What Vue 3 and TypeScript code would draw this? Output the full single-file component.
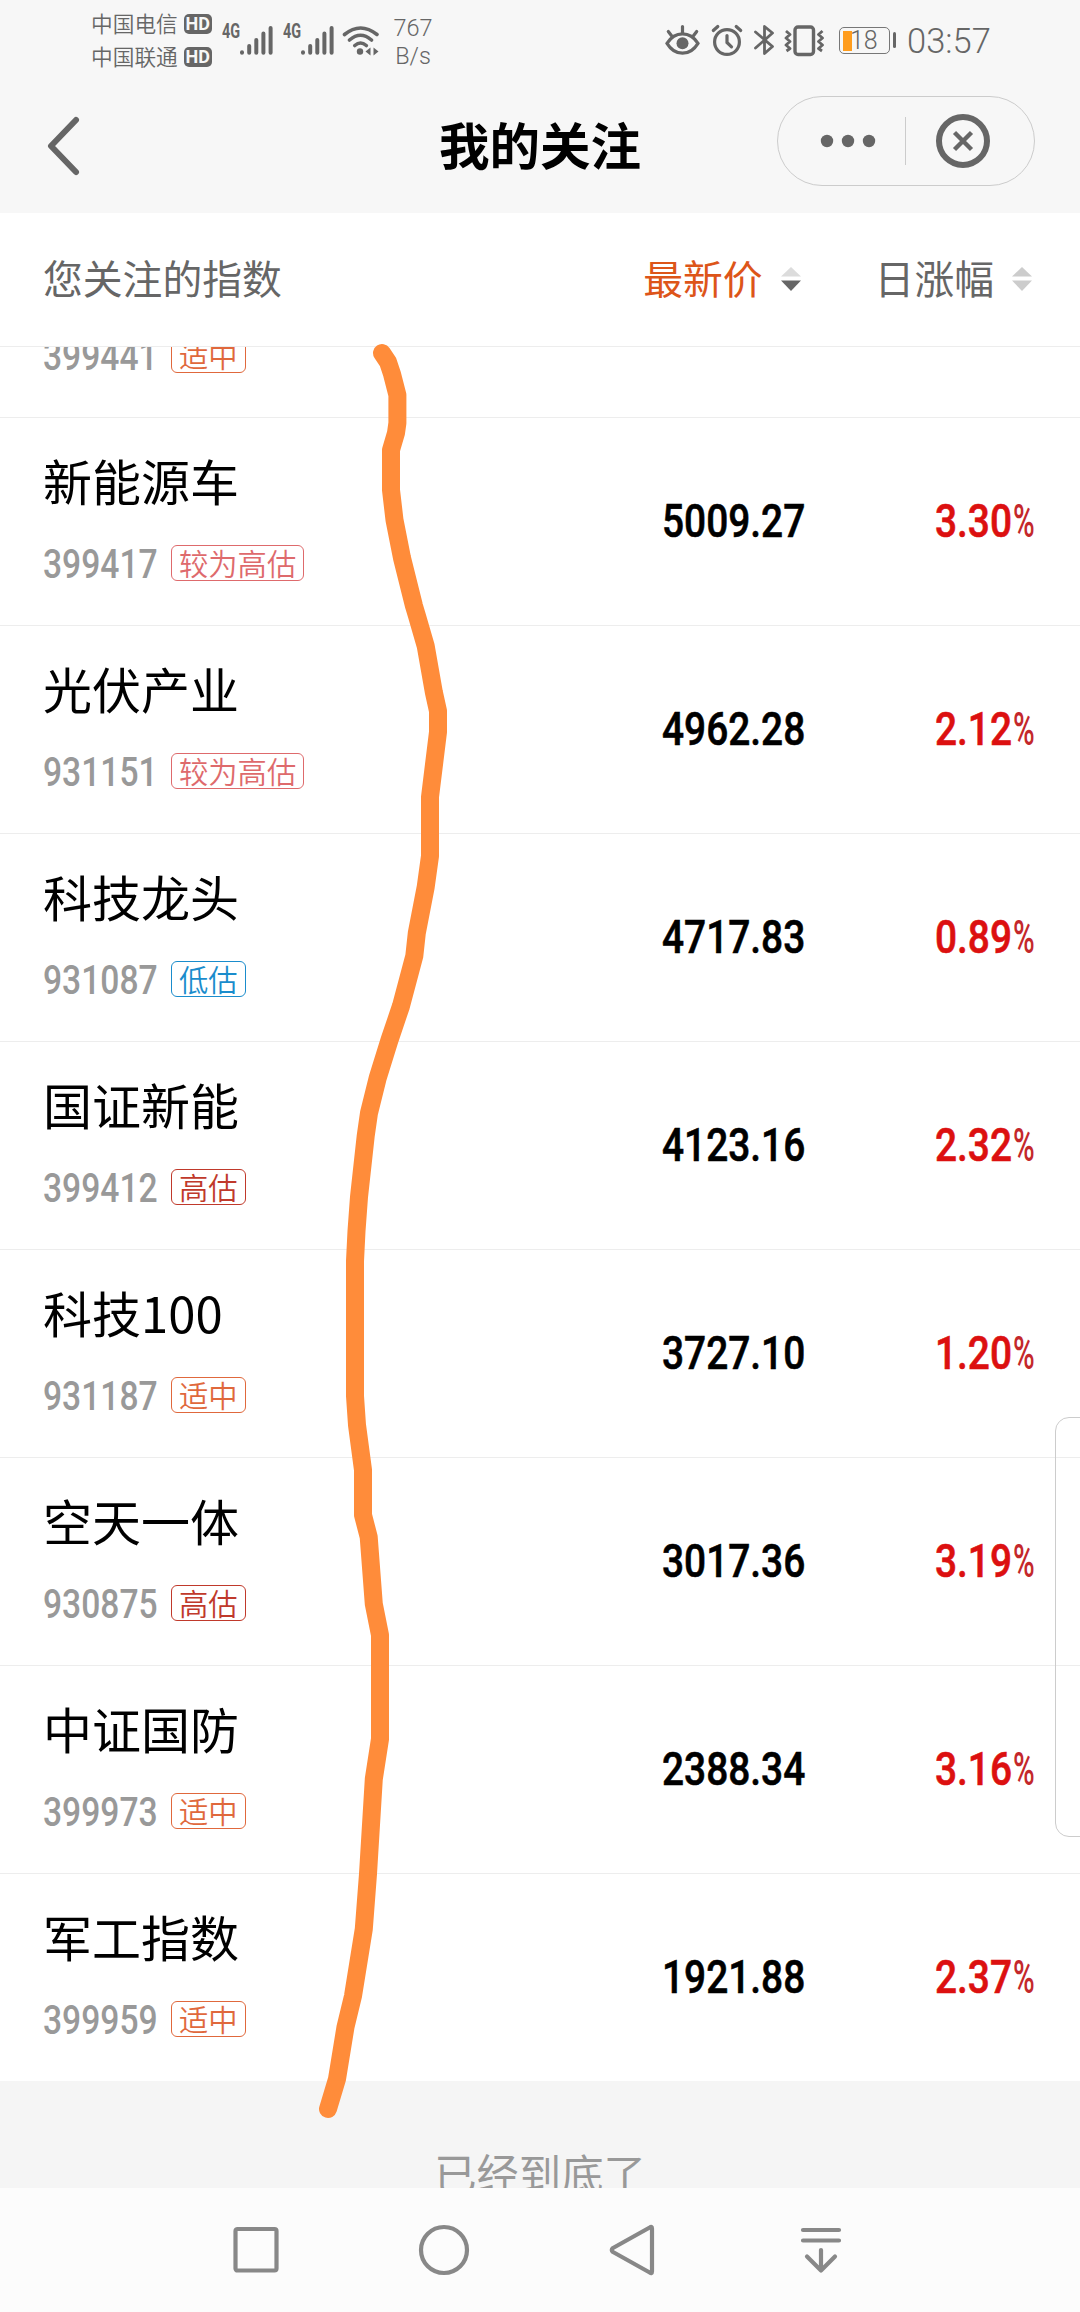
<script setup lang="ts">
type Level = 'fair' | 'rather' | 'high' | 'low'

interface IndexRow {
  name: string
  code: string
  level: Level
  price: string
  change: string
}

const levelText: Record<Level, string> = {
  fair: '适中',
  rather: '较为高估',
  high: '高估',
  low: '低估',
}

const rows: IndexRow[] = [
  { name: '', code: '399441', level: 'fair', price: '', change: '' },
  { name: '新能源车', code: '399417', level: 'rather', price: '5009.27', change: '3.30' },
  { name: '光伏产业', code: '931151', level: 'rather', price: '4962.28', change: '2.12' },
  { name: '科技龙头', code: '931087', level: 'low', price: '4717.83', change: '0.89' },
  { name: '国证新能', code: '399412', level: 'high', price: '4123.16', change: '2.32' },
  { name: '科技100', code: '931187', level: 'fair', price: '3727.10', change: '1.20' },
  { name: '空天一体', code: '930875', level: 'high', price: '3017.36', change: '3.19' },
  { name: '中证国防', code: '399973', level: 'fair', price: '2388.34', change: '3.16' },
  { name: '军工指数', code: '399959', level: 'fair', price: '1921.88', change: '2.37' },
]

const carriers = ['中国电信', '中国联通']

// Freehand marker line drawn over the list
const marker: [number, number][] = [
  [382, 353], [388, 362], [392, 374], [397.4, 395], [397.4, 423], [396, 433], [391, 450], [391, 490], [394.5, 520],
  [402, 558], [414, 606], [417, 616], [425.7, 646], [433.8, 692], [438, 711], [438, 732], [430, 797], [430, 856],
  [425.7, 887], [416.8, 933], [414.3, 956], [401, 1006], [389.5, 1040], [377.7, 1078], [369, 1113], [365.7, 1136],
  [359, 1197], [356.5, 1231], [355, 1261], [355, 1396], [357, 1425], [363, 1470], [363, 1515], [368.7, 1537],
  [373.8, 1604], [380, 1635], [380, 1739], [373.8, 1779], [368, 1874], [363.8, 1929], [353, 1996], [345.5, 2027],
  [337, 2079], [328, 2109],
]
const markerPoints = marker.map((p) => p.join(',')).join(' ')
</script>

<template>
  <div class="screen">
    <header class="status">
      <div class="carriers">
        <div v-for="c in carriers" :key="c" class="carrier">
          <span>{{ c }}</span><b class="hd">HD</b>
        </div>
      </div>
      <div v-for="n in 2" :key="n" class="signal">
        <span class="gen">4G</span>
        <svg width="34" height="34" viewBox="0 0 34 34">
          <g stroke="#666" stroke-width="4" stroke-linecap="round">
            <path d="M3 29.2v.6M10.2 23v6.8M17.3 17v12.8M24.4 10.5v19.3M31.6 5v24.8" />
          </g>
        </svg>
      </div>
      <svg class="wifi" width="40" height="34" viewBox="0 0 40 34">
        <g fill="none" stroke="#666" stroke-width="3.6" stroke-linecap="round">
          <path d="M3.5 11.5Q19.5-1.5 36 11.5M8.5 17Q19.5 7.5 30.5 17M13.8 22.5Q19.5 17.5 25.3 22.5" />
        </g>
        <circle cx="19" cy="28.5" r="3.2" fill="#666" />
        <path d="M24.5 28.5l5-4v8zM37.5 28.5l-5-4v8z" fill="#666" />
      </svg>
      <div class="speed"><span>767</span><span>B/s</span></div>
      <div class="spacer"></div>
      <div class="tray">
        <svg width="36" height="34" viewBox="0 0 36 34">
          <g fill="none" stroke="#666" stroke-width="3.2" stroke-linecap="round">
            <path d="M3 20.3Q9 10.8 18.5 10.8T34 20.3Q28 30.2 18.5 30.2T3 20.3zM18.5 3.5v6M4.3 8.5l4 5.2M32.7 8.5l-4 5.2" />
          </g>
          <circle cx="18.5" cy="20.3" r="6" fill="#666" />
        </svg>
        <svg width="32" height="34" viewBox="0 0 32 34">
          <g fill="none" stroke="#666" stroke-width="3.2" stroke-linecap="round">
            <circle cx="16" cy="19" r="12.4" />
            <path d="M16 12.5v7l4.5 4.3M2.3 7.5l4.5-4M29.7 7.5l-4.5-4" />
          </g>
        </svg>
        <svg width="22" height="34" viewBox="0 0 22 34">
          <path d="M2.500 9l17 14.500L11.500 30.500V3.500l8 6.500L2.500 25" fill="none" stroke="#666" stroke-width="2.8" stroke-linecap="round" stroke-linejoin="round" />
        </svg>
        <svg width="40" height="34" viewBox="0 0 40 34">
          <g fill="none" stroke="#666" stroke-width="3" stroke-linejoin="round">
            <rect x="11" y="4" width="18.5" height="27.5" rx="3" stroke-width="3.4" />
            <path d="M2 8l4 3.500-4 3.500 4 3.500-4 3.500 4 3.500-3.500 2.500M38.500 8l-4 3.500 4 3.500-4 3.500 4 3.500-4 3.500 3.500 2.500" stroke-width="2.8" />
          </g>
        </svg>
        <div class="battery"><i></i><span>18</span></div>
        <span class="time">03:57</span>
      </div>
    </header>

    <nav class="titlebar">
      <svg class="back" width="36" height="62" viewBox="0 0 36 62">
        <path d="M30 5L5 31l25 26" fill="none" stroke="#666" stroke-width="6" stroke-linecap="round" stroke-linejoin="round" />
      </svg>
      <h1>我的关注</h1>
      <div class="capsule">
        <svg width="56" height="14" viewBox="0 0 56 14" fill="#666">
          <circle cx="7" cy="7" r="6.2" /><circle cx="28" cy="7" r="6.2" /><circle cx="49" cy="7" r="6.2" />
        </svg>
        <i></i>
        <svg width="56" height="56" viewBox="0 0 56 56" fill="none" stroke="#666">
          <circle cx="28" cy="28" r="24" stroke-width="6" />
          <path d="M19.500 19.500l17 17M36.500 19.500l-17 17" stroke-width="4.4" />
        </svg>
      </div>
    </nav>

    <div class="columns">
      <span class="col-name">您关注的指数</span>
      <span class="col-price">最新价</span>
      <svg class="sort" width="20" height="26" viewBox="0 0 20 26">
        <path d="M0 10.500L10 1l10 9.500z" fill="#dcdcdc" /><path d="M0 14.500h20L10 25z" fill="#666" />
      </svg>
      <span class="col-change">日涨幅</span>
      <svg class="sort" width="20" height="26" viewBox="0 0 20 26">
        <path d="M0 10.500L10 1l10 9.500z" fill="#ccc" /><path d="M0 14.500h20L10 25z" fill="#ccc" />
      </svg>
    </div>

    <main class="viewport">
      <ul class="list">
        <li v-for="r in rows" :key="r.code" class="row">
          <div class="info">
            <div class="name">{{ r.name }}</div>
            <div class="sub">
              <span class="code"><span>{{ r.code }}</span></span>
              <span class="tag" :class="r.level">{{ levelText[r.level] }}</span>
            </div>
          </div>
          <div class="price"><span>{{ r.price }}</span></div>
          <div class="change">
            <template v-if="r.change">
              <span class="figure">{{ r.change }}</span><span class="percent">%</span>
            </template>
          </div>
        </li>
      </ul>
      <p class="end">已经到底了</p>
    </main>

    <footer class="keys">
      <svg width="56" height="56" viewBox="0 0 56 56"><rect x="7.5" y="7" width="41" height="41.5" rx="2" /></svg>
      <svg width="56" height="56" viewBox="0 0 56 56"><circle cx="28" cy="28" r="23" /></svg>
      <svg width="56" height="56" viewBox="0 0 56 56"><path d="M47 6.500v43q0 2.500-2.300 1L8 30q-2.500-2 0-4L44.700 5.500Q47 4 47 6.500z" /></svg>
      <svg width="56" height="56" viewBox="0 0 56 56"><path d="M10 8h36M10 18.500h36M28 28v20M14 34.500L28 48.500l14-14" /></svg>
    </footer>

    <div class="drawer"></div>
    <svg class="marker" width="1080" height="2312" viewBox="0 0 1080 2312">
      <polyline :points="markerPoints" />
    </svg>
  </div>
</template>

<style>
body {
  margin: 0;
  background: #fff;
}
</style>

<style scoped>
.screen {
  position: relative;
  display: flex;
  flex-direction: column;
  width: 1080px;
  height: 2312px;
  overflow: hidden;
  background: #fff;
  color: #000;
  font-family: 'Noto Sans CJK SC', sans-serif;
}
svg {
  display: block;
  flex: none;
}
.status {
  display: flex;
  align-items: center;
  box-sizing: border-box;
  height: 80px;
  padding: 0 91px 0 91px;
  background: #f7f7f7;
  color: #666;
}
.carriers {
  width: 131px;
}
.carrier {
  display: flex;
  align-items: center;
  height: 33px;
  font-size: 21.7px;
  line-height: 32px;
  font-weight: 350;
}
.carrier span {
  margin-top: -2px;
}
.hd {
  width: 28px;
  height: 20px;
  margin-left: 6px;
  border-radius: 5px;
  background: #666;
  color: #f7f7f7;
  font: 700 18px/20px Roboto, sans-serif;
  text-align: center;
}
.signal {
  display: flex;
  align-items: center;
  width: 61px;
}
.gen {
  width: 17px;
  height: 36px;
  font: 700 19.5px/20px Roboto, sans-serif;
  transform: scaleX(0.74);
  transform-origin: left;
  white-space: nowrap;
}
.signal svg {
  margin-top: -1px;
}
.wifi {
  margin-left: -3px;
}
.speed {
  display: flex;
  flex-direction: column;
  width: 60px;
  margin: 3px 0 0 2px;
  align-items: center;
  font: 350 23.5px/28px Roboto, sans-serif;
}
.spacer {
  flex: 1;
}
.tray {
  display: flex;
  align-items: center;
}
.tray svg:nth-child(2) {
  margin-left: 11px;
}
.tray svg:nth-child(3) {
  margin-left: 10px;
}
.tray svg:nth-child(4) {
  margin-left: 9px;
}
.battery {
  position: relative;
  display: flex;
  align-items: center;
  box-sizing: border-box;
  width: 51px;
  height: 27px;
  margin: 1px 17px 0 15px;
  padding-left: 2.5px;
  border: 1.5px solid #777;
  border-radius: 5px;
}
.battery::after {
  content: '';
  position: absolute;
  right: -7px;
  top: 4px;
  width: 3.5px;
  height: 16px;
  border-radius: 2px;
  background: #666;
}
.battery i {
  width: 9.5px;
  height: 20px;
  background: #ff9d1e;
}
.battery span {
  margin-left: -2px;
  font: 350 25px/26px Roboto, sans-serif;
}
.time {
  width: 82px;
  margin-top: 2px;
  font: 350 34.5px/40px Roboto, sans-serif;
  white-space: nowrap;
}
.titlebar {
  display: flex;
  align-items: center;
  box-sizing: border-box;
  height: 133px;
  padding: 0 45px 2px 46px;
  background: #f7f7f7;
}
.back {
  margin-right: 357px;
}
h1 {
  flex: 1;
  margin: -6px 0 0;
  font-size: 50.5px;
  line-height: 70px;
  font-weight: 700;
}
.capsule {
  display: flex;
  align-items: center;
  box-sizing: border-box;
  width: 258px;
  height: 90px;
  margin-top: -9px;
  padding-left: 42px;
  border: 1.5px solid #ccc;
  border-radius: 45px;
}
.capsule i {
  width: 1px;
  height: 48px;
  margin: 0 29px 0 29px;
  background: #ccc;
}
.columns {
  display: flex;
  align-items: center;
  box-sizing: border-box;
  height: 134px;
  padding: 0 48px 1px 43px;
  border-bottom: 1px solid #ededed;
  color: #666;
  font-size: 39.8px;
  line-height: 60px;
}
.columns span {
  margin-top: -4px;
}
.sort {
  margin-top: -1px;
}
.col-name {
  flex: 1;
}
.col-price {
  color: #dd5519;
}
.col-price + .sort {
  margin-right: 74px;
  margin-left: 18px;
}
.col-change + .sort {
  margin-left: 18px;
}
.viewport {
  height: 1841px;
  overflow: hidden;
  background: #f5f5f5;
}
.list {
  margin: -137px 0 0;
  padding: 0;
  list-style: none;
  background: #fff;
}
.row {
  display: flex;
  align-items: center;
  box-sizing: border-box;
  height: 208px;
  padding: 0 45px 0 43px;
  border-bottom: 1px solid #ededed;
}
.row:last-child {
  border-bottom-color: #f5f5f5;
}
.info {
  flex: 1;
  align-self: flex-start;
  padding-top: 32px;
}
.name {
  height: 60px;
  font-size: 49px;
  line-height: 60px;
}
.sub {
  display: flex;
  align-items: center;
  height: 36px;
  margin-top: 35px;
}
.code {
  width: 128px;
  margin-top: 2px;
  color: #999;
  font: 500 40.5px/36px Roboto, sans-serif;
}
.code span,
.price span,
.figure {
  display: block;
  width: 0;
  transform: scaleX(0.83);
  transform-origin: left;
  white-space: nowrap;
}
.tag {
  box-sizing: border-box;
  height: 36px;
  padding: 0 7px;
  border: 1.5px solid;
  border-radius: 6px;
  font-size: 29.3px;
  line-height: 32px;
  font-weight: 350;
}
.tag.fair {
  color: #e0683c;
}
.tag.rather {
  color: #de6a6c;
}
.tag.high {
  color: #c0392b;
}
.tag.low {
  color: #1a8ccc;
}
.price {
  width: 144px;
  margin-top: -1px;
  font: 500 46.8px/60px Roboto, sans-serif;
  -webkit-text-stroke: 0.6px currentColor;
}
.change {
  display: flex;
  width: 100px;
  margin-top: -1px;
  margin-left: 129px;
  color: #dc1010;
  font: 500 46.8px/60px Roboto, sans-serif;
  -webkit-text-stroke: 0.6px currentColor;
}
.figure {
  width: 78px;
}
.percent {
  width: 22px;
  color: #c4282b;
  font-weight: 500;
  -webkit-text-stroke: 0;
  transform: scaleX(0.63);
  transform-origin: left;
}
.end {
  margin: 0;
  padding-top: 60px;
  color: #999;
  font-size: 42.3px;
  line-height: 60px;
  text-align: center;
}
.keys {
  display: flex;
  flex: 1;
  gap: 132.3px;
  box-sizing: border-box;
  padding: 34px 0 0 228px;
  background: #fcfcfc;
}
.keys svg {
  fill: none;
  stroke: #888;
  stroke-width: 4.2px;
  stroke-linecap: round;
  stroke-linejoin: round;
}
.drawer {
  position: absolute;
  top: 1417px;
  right: -20px;
  box-sizing: border-box;
  width: 45px;
  height: 420px;
  border: 1px solid #ccc;
  border-radius: 14px;
}
.marker {
  position: absolute;
  top: 0;
  left: 0;
  pointer-events: none;
}
.marker polyline {
  fill: none;
  stroke: #ff8c3a;
  stroke-width: 18px;
  stroke-linecap: round;
  stroke-linejoin: round;
}
</style>
